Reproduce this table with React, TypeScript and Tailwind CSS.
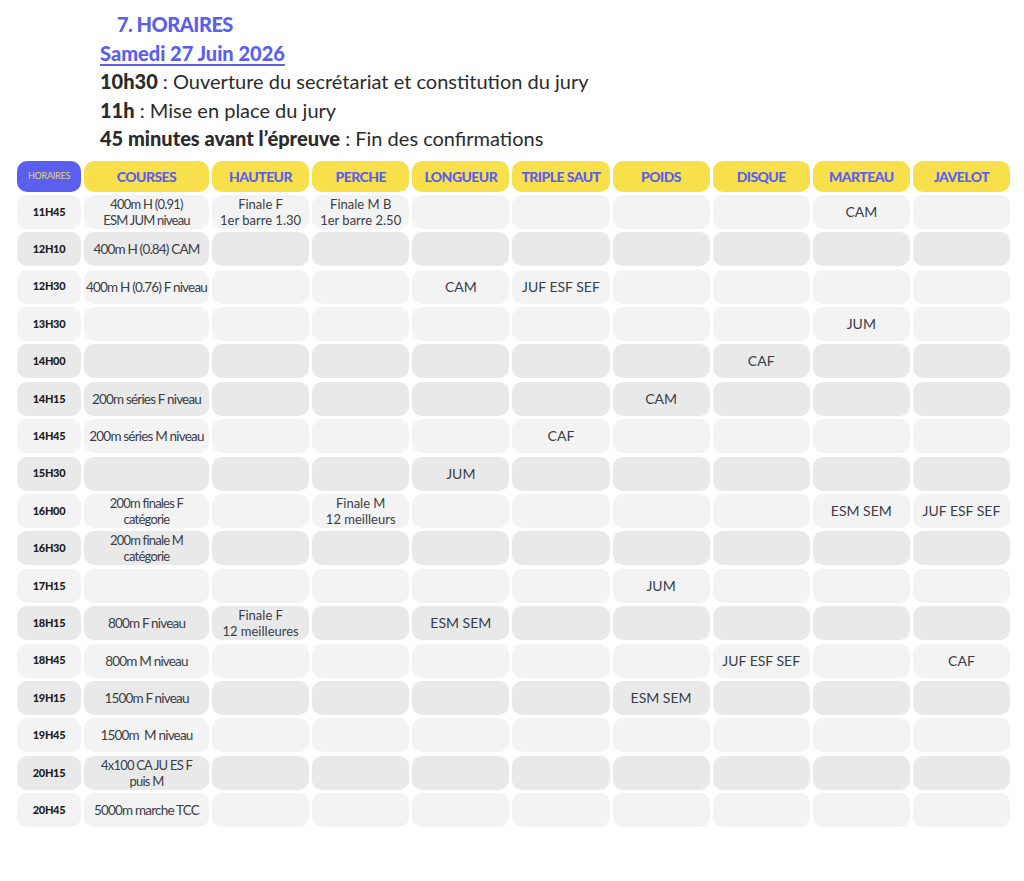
import React from 'react';

type Row = { time: string; dark: boolean; cells: string[] };

const headers = ['COURSES', 'HAUTEUR', 'PERCHE', 'LONGUEUR', 'TRIPLE SAUT', 'POIDS', 'DISQUE', 'MARTEAU', 'JAVELOT'];

const e = ['', '', '', '', '', '', '', '', ''];

const rows: Row[] = [
  { time: '11H45', dark: false, cells: ['400m H (0.91)\nESM JUM niveau', 'Finale F\n1er barre 1.30', 'Finale M B\n1er barre 2.50', '', '', '', '', 'CAM', ''] },
  { time: '12H10', dark: true, cells: ['400m H (0.84) CAM', '', '', '', '', '', '', '', ''] },
  { time: '12H30', dark: false, cells: ['400m H (0.76) F niveau', '', '', 'CAM', 'JUF ESF SEF', '', '', '', ''] },
  { time: '13H30', dark: false, cells: ['', '', '', '', '', '', '', 'JUM', ''] },
  { time: '14H00', dark: true, cells: ['', '', '', '', '', '', 'CAF', '', ''] },
  { time: '14H15', dark: true, cells: ['200m séries F niveau', '', '', '', '', 'CAM', '', '', ''] },
  { time: '14H45', dark: false, cells: ['200m séries M niveau', '', '', '', 'CAF', '', '', '', ''] },
  { time: '15H30', dark: true, cells: ['', '', '', 'JUM', '', '', '', '', ''] },
  { time: '16H00', dark: false, cells: ['200m finales F\ncatégorie', '', 'Finale M\n12 meilleurs', '', '', '', '', 'ESM SEM', 'JUF ESF SEF'] },
  { time: '16H30', dark: true, cells: ['200m finale M\ncatégorie', '', '', '', '', '', '', '', ''] },
  { time: '17H15', dark: false, cells: ['', '', '', '', '', 'JUM', '', '', ''] },
  { time: '18H15', dark: true, cells: ['800m F niveau', 'Finale F\n12 meilleures', '', 'ESM SEM', '', '', '', '', ''] },
  { time: '18H45', dark: false, cells: ['800m M niveau', '', '', '', '', '', 'JUF ESF SEF', '', 'CAF'] },
  { time: '19H15', dark: true, cells: ['1500m F niveau', '', '', '', '', 'ESM SEM', '', '', ''] },
  { time: '19H45', dark: false, cells: ['1500m  M niveau', ...e.slice(1)] },
  { time: '20H15', dark: true, cells: ['4x100 CA JU ES F\npuis M', ...e.slice(1)] },
  { time: '20H45', dark: false, cells: ['5000m marche TCC', ...e.slice(1)] },
];

const Cell: React.FC<{ text: string; dark: boolean; course?: boolean }> = ({ text, dark, course }) => {
  const lines = text.split('\n');
  const twoLine = lines.length > 1;
  return (
    <div
      className={`h-[34px] rounded-[10px] flex flex-col items-center justify-center text-center whitespace-pre text-[#3a3e47] ${
        dark ? 'bg-[#e9e9e9]' : 'bg-[#f3f3f3]'
      } ${course ? 'tracking-[-0.06em]' : ''} ${
        twoLine ? 'text-[13px] leading-[16px]' : course ? 'text-[13.5px] leading-[16px]' : 'text-[14px] leading-[16px]'
      }`}
    >
      {lines.map((l, i) => (
        <span key={i}>{l}</span>
      ))}
    </div>
  );
};

export default function App() {
  return (
    <div className="w-[1024px] min-h-[881px] bg-white text-[#2b2b2b]" style={{ fontFamily: 'Lato, "Open Sans", sans-serif' }}>
      {/* Intro */}
      <div className="pl-[100px] pt-[10px] text-[20px] leading-[28.5px]">
        <h2 className="pl-[17px] font-black text-[#5a5ff0] tracking-tight">7. HORAIRES</h2>
        <p className="font-black text-[#5a5ff0] underline underline-offset-[3px]">Samedi 27 Juin 2026</p>
        <p>
          <span className="font-black">10h30</span> : Ouverture du secrétariat et constitution du jury
        </p>
        <p>
          <span className="font-black">11h</span> : Mise en place du jury
        </p>
        <p>
          <span className="font-black">45 minutes avant l’épreuve</span> : Fin des confirmations
        </p>
      </div>

      {/* Table */}
      <div className="mt-[8px] ml-[17px] w-[993px] grid grid-cols-[64px_125px_repeat(8,minmax(0,1fr))] gap-x-[3px] gap-y-[3.4px]">
        <div className="h-[31px] rounded-[10px] bg-[#5a5ff0] flex items-center justify-center text-[9px] tracking-tight text-[#e3d765]">
          HORAIRES
        </div>
        {headers.map((h) => (
          <div
            key={h}
            className="h-[31px] rounded-[10px] bg-[#f7e04c] flex items-center justify-center text-[14px] font-black tracking-[-0.04em] text-[#5a5ff0] whitespace-nowrap"
          >
            {h}
          </div>
        ))}
        {rows.map((r) => (
          <React.Fragment key={r.time}>
            <div
              className={`h-[34px] rounded-[10px] flex items-center justify-center text-[11px] font-black tracking-tight text-[#1d1d1d] ${
                r.dark ? 'bg-[#e9e9e9]' : 'bg-[#f3f3f3]'
              }`}
            >
              {r.time}
            </div>
            {r.cells.map((c, i) => (
              <Cell key={i} text={c} dark={r.dark} course={i === 0} />
            ))}
          </React.Fragment>
        ))}
      </div>
    </div>
  );
}
